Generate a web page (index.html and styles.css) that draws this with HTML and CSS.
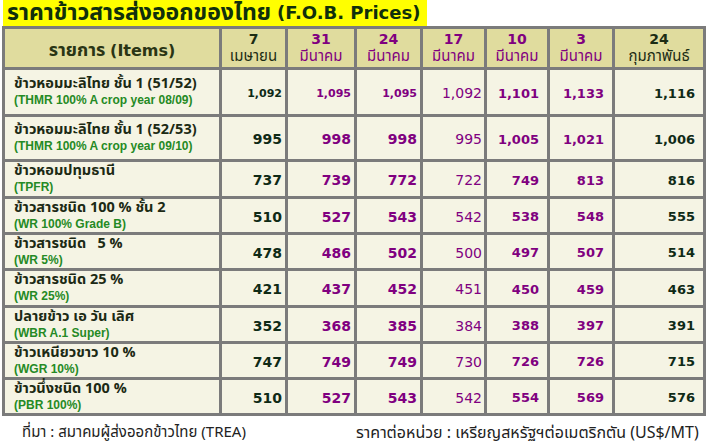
FILE: index.html
```html
<!DOCTYPE html>
<html lang="th">
<head>
<meta charset="utf-8">
<title>ราคาข้าวสารส่งออกของไทย</title>
<link rel="stylesheet" href="styles.css">
</head>
<body>
<div class="page">
  <h1 class="title">ราคาข้าวสารส่งออกของไทย <span class="lat">(F.O.B. Prices)</span></h1>
  <div class="grid">
    <div class="hd items-hd">รายการ <span class="lat">(Items)</span></div>
    <div class="hd dk"><span class="d">7</span><span class="m">เมษายน</span></div>
    <div class="hd"><span class="d">31</span><span class="m">มีนาคม</span></div>
    <div class="hd"><span class="d">24</span><span class="m">มีนาคม</span></div>
    <div class="hd"><span class="d">17</span><span class="m">มีนาคม</span></div>
    <div class="hd"><span class="d">10</span><span class="m">มีนาคม</span></div>
    <div class="hd"><span class="d">3</span><span class="m">มีนาคม</span></div>
    <div class="hd dk"><span class="d">24</span><span class="m">กุมภาพันธ์</span></div>

    <div class="it"><span class="th">ข้าวหอมมะลิไทย ชั้น 1 (51/52)</span><span class="en">(THMR 100% A crop year 08/09)</span></div>
    <div class="n c7 sm">1,092</div><div class="n pu sm">1,095</div><div class="n pu sm">1,095</div><div class="n pu rg">1,092</div><div class="n pu md">1,101</div><div class="n pu md">1,133</div><div class="n dk md">1,116</div>

    <div class="it"><span class="th">ข้าวหอมมะลิไทย ชั้น 1 (52/53)</span><span class="en">(THMR 100% A crop year 09/10)</span></div>
    <div class="n c7">995</div><div class="n pu">998</div><div class="n pu">998</div><div class="n pu rg">995</div><div class="n pu md">1,005</div><div class="n pu md">1,021</div><div class="n dk md">1,006</div>

    <div class="it"><span class="th">ข้าวหอมปทุมธานี</span><span class="en">(TPFR)</span></div>
    <div class="n c7">737</div><div class="n pu">739</div><div class="n pu">772</div><div class="n pu rg">722</div><div class="n pu md">749</div><div class="n pu md">813</div><div class="n dk md">816</div>

    <div class="it"><span class="th">ข้าวสารชนิด 100 % ชั้น 2</span><span class="en">(WR 100% Grade B)</span></div>
    <div class="n c7">510</div><div class="n pu">527</div><div class="n pu">543</div><div class="n pu rg">542</div><div class="n pu md">538</div><div class="n pu md">548</div><div class="n dk md">555</div>

    <div class="it"><span class="th">ข้าวสารชนิด &nbsp; 5 %</span><span class="en">(WR 5%)</span></div>
    <div class="n c7">478</div><div class="n pu">486</div><div class="n pu">502</div><div class="n pu rg">500</div><div class="n pu md">497</div><div class="n pu md">507</div><div class="n dk md">514</div>

    <div class="it"><span class="th">ข้าวสารชนิด 25 %</span><span class="en">(WR 25%)</span></div>
    <div class="n c7">421</div><div class="n pu">437</div><div class="n pu">452</div><div class="n pu rg">451</div><div class="n pu md">450</div><div class="n pu md">459</div><div class="n dk md">463</div>

    <div class="it"><span class="th">ปลายข้าว เอ วัน เลิศ</span><span class="en">(WBR A.1 Super)</span></div>
    <div class="n c7">352</div><div class="n pu">368</div><div class="n pu">385</div><div class="n pu rg">384</div><div class="n pu md">388</div><div class="n pu md">397</div><div class="n dk md">391</div>

    <div class="it"><span class="th">ข้าวเหนียวขาว 10 %</span><span class="en">(WGR 10%)</span></div>
    <div class="n c7">747</div><div class="n pu">749</div><div class="n pu">749</div><div class="n pu rg">730</div><div class="n pu md">726</div><div class="n pu md">726</div><div class="n dk md">715</div>

    <div class="it"><span class="th">ข้าวนึ่งชนิด 100 %</span><span class="en">(PBR 100%)</span></div>
    <div class="n c7">510</div><div class="n pu">527</div><div class="n pu">543</div><div class="n pu rg">542</div><div class="n pu md">554</div><div class="n pu md">569</div><div class="n dk md">576</div>
  </div>
  <div class="foot">
    <span class="src">ที่มา : สมาคมผู้ส่งออกข้าวไทย (TREA)</span>
    <span class="unit">ราคาต่อหน่วย : เหรียญสหรัฐฯต่อเมตริกตัน (US$/MT)</span>
  </div>
</div>
</body>
</html>
```
FILE: styles.css
```css
* { box-sizing: border-box; }
html, body { margin: 0; padding: 0; background: #ffffff; }
body { font-family: Tahoma, "Noto Sans Thai", "Loma", "Garuda", "Liberation Sans", sans-serif; }
.page { width: 707px; }

.title {
  margin: 0 0 0 3px;
  width: 424px;
  height: 26px;
  background: #ffff00;
  color: #10300c;
  font-size: 23px;
  font-weight: bold;
  line-height: 26px;
  padding-left: 4px;
  white-space: nowrap;
}
.title .lat { font-family: "DejaVu Sans", Verdana, sans-serif; font-size: 18px; vertical-align: 1px; }

.grid {
  margin-left: 2px;
  width: 704px;
  display: grid;
  grid-template-columns: 214px 63px 66px 63px 61px 60px 62px 88px;
  grid-template-rows: 38px 44px 42px 34px 33px 33px 34px 33px 33px 33px;
  gap: 3px;
  padding: 3px;
  background: #7b7b7b;
}

.hd {
  background: #e0dc9e;
  color: #800080;
  display: flex;
  flex-direction: column;
  align-items: center;
  justify-content: center;
  line-height: 17px;
}
.hd.dk { color: #1c2c14; }
.hd .d { font-family: "DejaVu Sans", Verdana, sans-serif; font-weight: bold; font-size: 14px; }
.hd .m { font-size: 15px; line-height: 18px; }
.items-hd {
  display: block;
  text-align: center;
  color: #2a3514;
  font-weight: bold;
  font-size: 18px;
  line-height: 38px;
  padding-top: 3px;
  white-space: nowrap;
}
.items-hd .lat { font-family: "DejaVu Sans", Verdana, sans-serif; font-size: 16px; }

.it {
  background: #f5f4e4;
  display: flex;
  flex-direction: column;
  justify-content: center;
  padding-left: 9px;
  line-height: 16px;
  white-space: nowrap;
}
.it .th { color: #1c2a14; font-size: 14.5px; font-weight: bold; line-height: 17px; }
.it .en { color: #258a25; font-family: "Liberation Sans", Arial, sans-serif; font-size: 12px; font-weight: bold; line-height: 15px; }

.n {
  background: #f5f4e4;
  display: flex;
  align-items: center;
  justify-content: flex-end;
  padding-right: 3px;
  font-family: "DejaVu Sans", Verdana, sans-serif;
  font-weight: bold;
  font-size: 14px;
  padding-top: 2px;
}
.n.c7 { color: #0f2a16; }
.n.pu { color: #800080; }
.n.dk { color: #0f2a16; }
.n.sm { font-size: 11px; }
.n.rg { font-weight: normal; font-size: 14px; padding-right: 2px; }
.n.md { font-size: 13px; padding-right: 8px; }

.foot {
  display: flex;
  padding-top: 7px;
  color: #222222;
  line-height: 20px;
  white-space: nowrap;
}
.src { margin-left: 22px; width: 334px; font-size: 15px; }
.unit { font-size: 16px; }
```
